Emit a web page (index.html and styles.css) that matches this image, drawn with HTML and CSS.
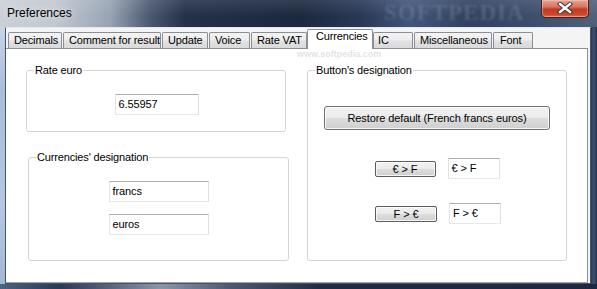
FILE: index.html
```html
<!DOCTYPE html>
<html>
<head>
<meta charset="utf-8">
<link rel="stylesheet" href="styles.css">
</head>
<body>
<div class="win">
  <div class="titlebar">
    <span class="title">Preferences</span>
    <div class="close">
      <svg width="16" height="12" viewBox="0 0 16 12">
        <path d="M3 2 L13 10 M13 2 L3 10" stroke="#3a2a28" stroke-width="4.2" stroke-linecap="square" fill="none"/>
        <path d="M3 2 L13 10 M13 2 L3 10" stroke="#ffffff" stroke-width="2.4" stroke-linecap="square" fill="none"/>
      </svg>
    </div>
  </div>
  <div class="mid">
    <div class="lf"></div>
    <div class="client">
      <div class="tabs">
        <div class="tab t-dec">Decimals</div>
        <div class="tab t-com">Comment for result</div>
        <div class="tab t-upd">Update</div>
        <div class="tab t-voi">Voice</div>
        <div class="tab t-vat">Rate VAT</div>
        <div class="tab t-cur sel">Currencies</div>
        <div class="tab t-ic">IC</div>
        <div class="tab t-mis">Miscellaneous</div>
        <div class="tab t-fon">Font</div>
      </div>
      <div class="panel">
        <div class="lcol">
          <div class="grp g-rate">
            <span class="cap">Rate euro</span>
            <div class="field f-rate">6.55957</div>
          </div>
          <div class="grp g-cur">
            <span class="cap">Currencies' designation</span>
            <div class="field f-cur">francs</div>
            <div class="field f-cur f-gap">euros</div>
          </div>
        </div>
        <div class="grp g-btn">
          <span class="cap">Button's designation</span>
          <div class="btn b-restore">Restore default (French francs euros)</div>
          <div class="brow r1">
            <div class="btn b-small">€ &gt; F</div>
            <div class="field f-small">€ &gt; F</div>
          </div>
          <div class="brow r2">
            <div class="btn b-small b-small2">F &gt; €</div>
            <div class="field f-small">F &gt; €</div>
          </div>
        </div>
      </div>
    </div>
    <div class="rf"></div>
  </div>
  <div class="bf"></div>
  <div class="wm wm-big">SOFTPEDIA</div>
  <div class="wm wm-url">www.softpedia.com</div>
</div>
</body>
</html>
```
FILE: styles.css
```css
* { box-sizing: border-box; margin: 0; padding: 0; }
html, body { width: 597px; height: 289px; overflow: hidden; }
body {
  font-family: "Liberation Sans", Arial, sans-serif;
  font-size: 11px;
  color: #000;
  background: #1e2b44;
}
.win {
  position: relative;
  width: 597px;
  height: 289px;
  display: flex;
  flex-direction: column;
}
.titlebar {
  height: 27px;
  display: flex;
  align-items: flex-start;
  background:
    linear-gradient(to bottom, rgba(255,255,255,0.10), rgba(255,255,255,0) 60%),
    linear-gradient(to right, #cbd0d8 0, #c2c8d1 55px, #98a3b3 110px, #4a5870 150px, #243149 185px, #1c283f 300px, #283855 360px, #42557a 410px, #31415f 470px, #3c4d6b 530px, #51607a 597px);
}
.title {
  margin: 6px 0 0 7px;
  font-size: 12px;
  line-height: 14px;
  color: #000;
  text-shadow: 0 0 8px rgba(255,255,255,0.9);
}
.close {
  margin-left: auto;
  margin-right: 8px;
  width: 48px;
  height: 18px;
  border: 1px solid #4a2019;
  border-top: none;
  border-radius: 0 0 5px 5px;
  background: linear-gradient(#e7a597 0, #d87560 40%, #c23a20 55%, #c9482f 85%, #d8705a 100%);
  box-shadow: inset 0 0 0 1px rgba(255,210,200,0.45);
  display: flex;
  align-items: center;
  justify-content: center;
}
.close svg { display: block; margin-top: -1px; }
.mid { display: flex; height: 257px; }
.lf {
  width: 5px;
  background: linear-gradient(#cbd5e4, #a9bcd9 25%, #b6c7df 70%, #a4b6d2 100%);
}
.rf {
  width: 6px;
  background: linear-gradient(to right, #2a3a57, #3d5073 50%, #22304a);
}
.bf {
  height: 5px;
  background: linear-gradient(to right, #4e6283 0, #283857 60px, #56667f 110px, #8a97aa 160px, #4a5a75 230px, #1f2c45 320px, #1c2840 597px);
}
.client {
  width: 586px;
  display: flex;
  flex-direction: column;
  border: 1px solid #46546b;
  border-top-color: #e4e8ee;
  background: #f4f4f4;
}
.tabs {
  height: 20px;
  display: flex;
  align-items: flex-end;
  gap: 1px;
  padding-left: 2px;
}
.tab {
  height: 16px;
  line-height: 14px;
  padding-left: 5px;
  white-space: nowrap;
  letter-spacing: -0.15px;
  border: 1px solid #8b8e95;
  border-bottom: none;
  border-radius: 2px 2px 0 0;
  background: linear-gradient(#f4f4f4 0, #ededed 45%, #e2e2e2 55%, #d9d9d9 100%);
}
.t-dec { width: 54px; }
.t-com { width: 98px; }
.t-upd { width: 46px; }
.t-voi { width: 41px; }
.t-vat { width: 56px; }
.t-cur { width: 66px; }
.t-ic { width: 40px; padding-left: 4px; }
.t-mis { width: 78px; }
.t-fon { width: 40px; padding-left: 6px; }
.tab.sel {
  height: 20px;
  margin: 0 -1px -1px -1px;
  padding-left: 8px;
  line-height: 13px;
  background: #fff;
  position: relative;
  z-index: 1;
}
.panel {
  height: 235px;
  margin-right: 2px;
  background: #fff;
  border-top: 1px solid #8b8e95;
  border-right: 1px solid #8b8e95;
  border-bottom: 1px solid #a0a4aa;
  display: flex;
  padding: 21px 0 0 20px;
  gap: 18px;
}
.lcol {
  width: 263px;
  display: flex;
  flex-direction: column;
}
.grp {
  border: 1px solid #d5d5d5;
  border-radius: 3px;
  display: flex;
  flex-direction: column;
  align-items: center;
}
.cap {
  align-self: flex-start;
  margin: -7px 0 0 7px;
  padding: 0 1px;
  line-height: 13px;
  background: #fff;
  letter-spacing: -0.15px;
}
.g-rate { width: 260px; height: 62px; }
.g-cur { width: 261px; height: 104px; margin: 25px 0 0 2px; }
.g-btn { width: 260px; height: 191px; }
.field {
  height: 21px;
  line-height: 19px;
  padding-left: 3px;
  background: #fff;
  border: 1px solid;
  border-color: #abadb3 #dbdfe6 #e3e9ef #e2e3ea;
  border-radius: 1px;
  letter-spacing: -0.1px;
}
.f-rate { width: 84px; margin: 17px 0 0 1px; }
.f-cur { width: 100px; margin-top: 17px; }
.f-cur.f-gap { margin-top: 12px; }
.btn {
  text-align: center;
  border: 1px solid #707070;
  border-radius: 3px;
  background: linear-gradient(#f2f2f2 0, #ebebeb 48%, #dddddd 52%, #cfcfcf 100%);
  box-shadow: inset 0 0 0 1px rgba(255,255,255,0.8);
  letter-spacing: -0.1px;
}
.b-restore {
  width: 226px;
  height: 24px;
  line-height: 22px;
  margin-top: 29px;
}
.brow {
  display: flex;
  align-items: center;
  gap: 12px;
}
.r1 { margin-top: 28px; }
.r2 { margin-top: 24px; padding-left: 2px; }
.b-small {
  width: 61px;
  height: 16px;
  line-height: 14px;
  border-color: #5c5c5c;
  border-radius: 2px;
}
.b-small2 { width: 62px; }
.f-small { width: 52px; height: 21px; }
.wm {
  position: absolute;
  pointer-events: none;
  white-space: nowrap;
  font-family: "Liberation Serif", serif;
  font-weight: bold;
}
.wm-big {
  left: 384px;
  top: 1px;
  font-size: 23px;
  line-height: 24px;
  letter-spacing: 1px;
  color: rgba(175,185,200,0.22);
  filter: blur(1px);
}
.wm-url {
  left: 297px;
  top: 49px;
  font-family: "Liberation Sans", sans-serif;
  font-size: 9px;
  color: rgba(170,170,170,0.35);
}
```
